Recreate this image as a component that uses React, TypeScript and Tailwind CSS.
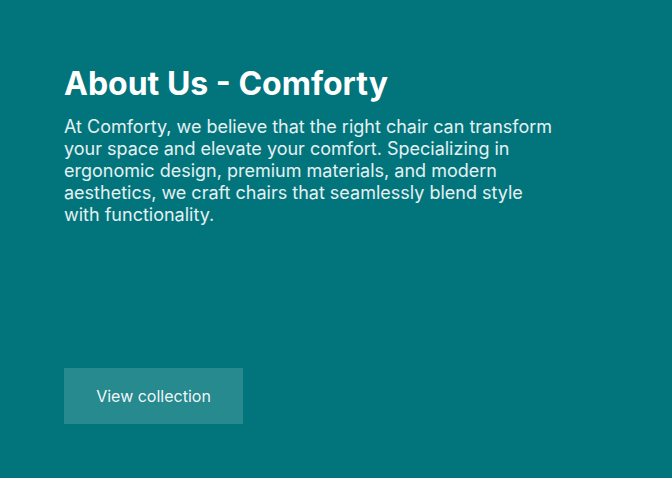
export default function App() {
  return (
    <div
      className="w-[672px] h-[478px] bg-[#02747c] px-16 pt-[64px] flex flex-col"
      style={{ fontFamily: "Inter, 'Noto Sans', sans-serif" }}
    >
      <h1 className="text-[32px] leading-[40px] font-bold text-white">About Us - Comforty</h1>
      <p className="mt-[12px] max-w-[492px] text-[18px] leading-[22px] text-white/90">
        At Comforty, we believe that the right chair can transform your space and elevate your
        comfort. Specializing in ergonomic design, premium materials, and modern aesthetics, we
        craft chairs that seamlessly blend style with functionality.
      </p>
      <button className="mt-auto mb-[54px] w-[179px] h-[56px] bg-[#278a8f] text-white/95 text-base">
        View collection
      </button>
    </div>
  );
}
